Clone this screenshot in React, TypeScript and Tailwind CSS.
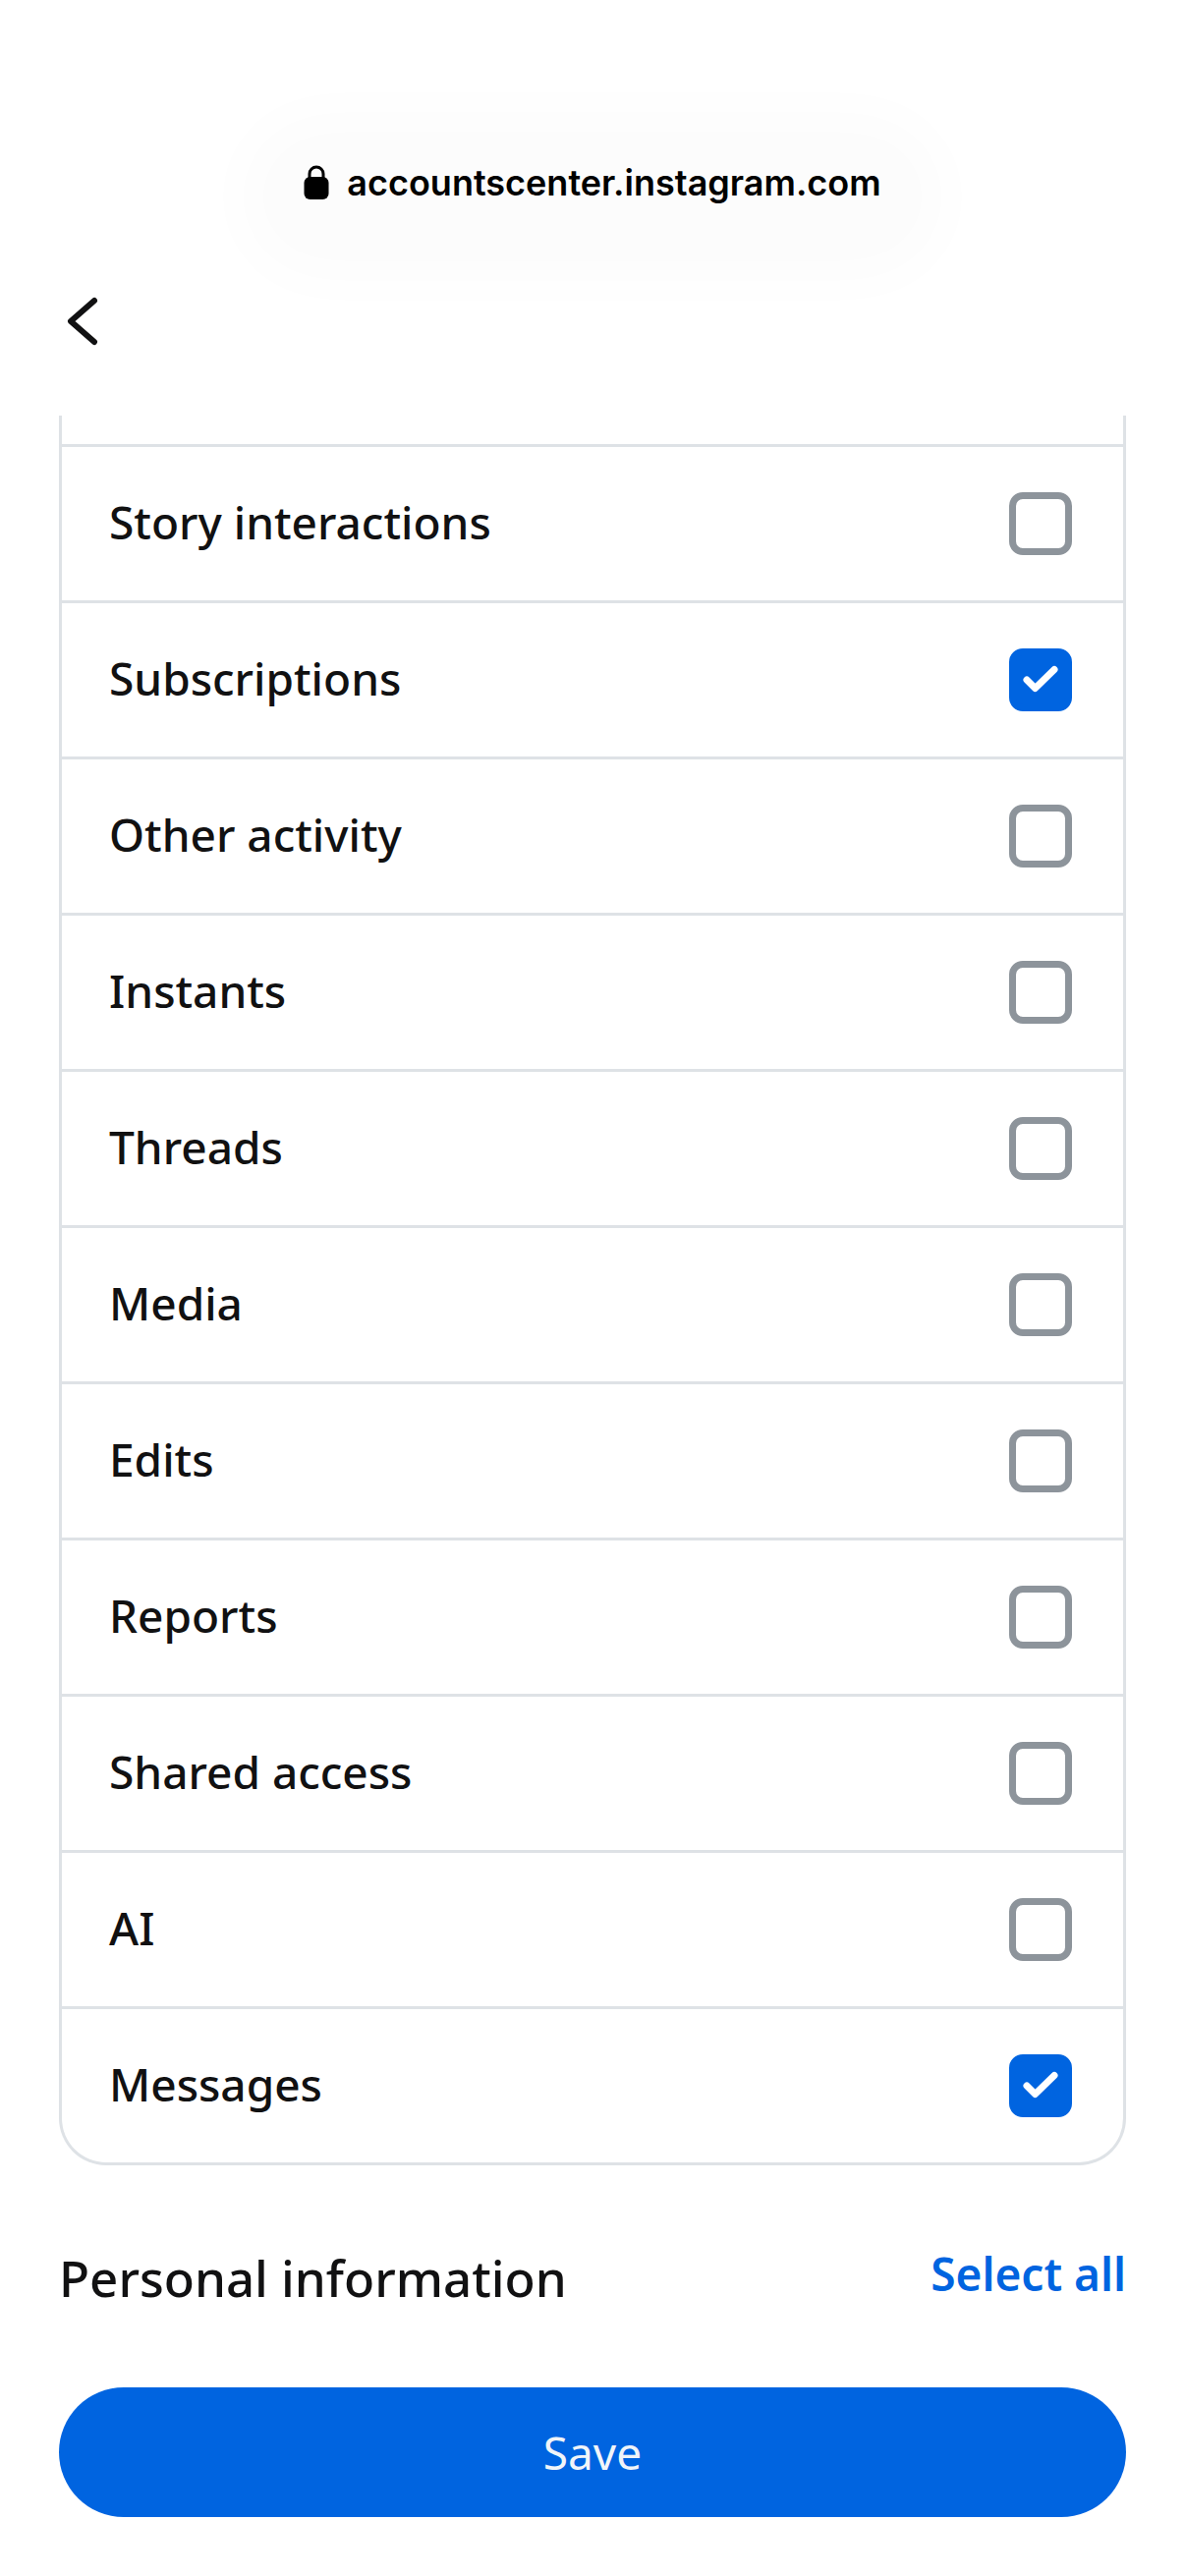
import { useState } from "react";

const options = [
  { name: "Story interactions", selected: false },
  { name: "Subscriptions", selected: true },
  { name: "Other activity", selected: false },
  { name: "Instants", selected: false },
  { name: "Threads", selected: false },
  { name: "Media", selected: false },
  { name: "Edits", selected: false },
  { name: "Reports", selected: false },
  { name: "Shared access", selected: false },
  { name: "AI", selected: false },
  { name: "Messages", selected: true },
];

function AddressBar() {
  return (
    <div className="flex justify-center pt-[150px]">
      <div className="flex h-[72px] items-center gap-[18px] rounded-full bg-[#fcfcfc] px-4 font-['Inter',sans-serif] shadow-[0_14px_60px_50px_#fcfcfc]">
        <svg viewBox="0 0 26 36" className="h-9 w-[26px]" aria-hidden="true">
          <path d="M6 18V9a7 7 0 0 1 14 0v9" fill="none" stroke="#000" strokeWidth="3" />
          <rect x="0.500" y="12" width="25" height="23" rx="6" fill="#000" />
        </svg>
        <span className="text-[36px] font-semibold text-black">accountscenter.instagram.com</span>
      </div>
    </div>
  );
}

function OptionRow({ name, selected }: { name: string; selected: boolean }) {
  const [checked, setChecked] = useState(selected);
  return (
    <li className="border-t-[3px] border-[#dee2e6]">
      <label className="flex h-[156px] items-center justify-between pr-[52px] pl-12 text-[46px] font-medium">
        <span className="pb-1 leading-[64px]">{name}</span>
        <span className="relative size-16">
          <input
            type="checkbox"
            checked={checked}
            onChange={(e) => setChecked(e.target.checked)}
            className="peer block size-16 appearance-none rounded-[14px] border-[7px] border-[#8d949b] checked:border-[#0064e0] checked:bg-[#0064e0]"
          />
          <svg
            viewBox="0 0 64 64"
            className="pointer-events-none absolute inset-0 hidden size-16 peer-checked:block"
            fill="none"
            stroke="#fff"
            strokeWidth="7"
            strokeLinecap="round"
            strokeLinejoin="round"
            aria-hidden="true"
          >
            <path d="M18 32L26.500 40.500L46 21.500" />
          </svg>
        </span>
      </label>
    </li>
  );
}

export default function App() {
  return (
    <div className="flex min-h-screen flex-col bg-white font-['Noto_Sans',sans-serif] text-[#111112]">
      <AddressBar />
      <nav className="px-[60px] pt-[69px]">
        <button type="button" aria-label="Back" className="block h-[72px]">
          <svg
            viewBox="0 0 48 72"
            className="h-[72px] w-12"
            fill="none"
            stroke="#111112"
            strokeWidth="6"
            strokeLinecap="round"
            strokeLinejoin="round"
            aria-hidden="true"
          >
            <path d="M36 15L12 36L36 57" />
          </svg>
        </button>
      </nav>
      <main className="mt-[60px] px-[60px]">
        <ul className="rounded-b-[48px] border-x-[3px] border-b-[3px] border-[#dee2e6] pt-[29px]">
          {options.map((option) => (
            <OptionRow key={option.name} {...option} />
          ))}
        </ul>
        <div className="flex items-start justify-between pt-20">
          <h2 className="text-[51px] leading-[68px] font-medium">Personal information</h2>
          <button type="button" className="text-[46px] leading-[60px] font-semibold text-[#0064e0]">
            Select all
          </button>
        </div>
      </main>
      <footer className="px-[60px] pt-[78px] pb-[60px]">
        <button type="button" className="h-[132px] w-full rounded-full bg-[#0064e0] text-[46px] text-[#f1f5f9]">
          Save
        </button>
      </footer>
    </div>
  );
}
